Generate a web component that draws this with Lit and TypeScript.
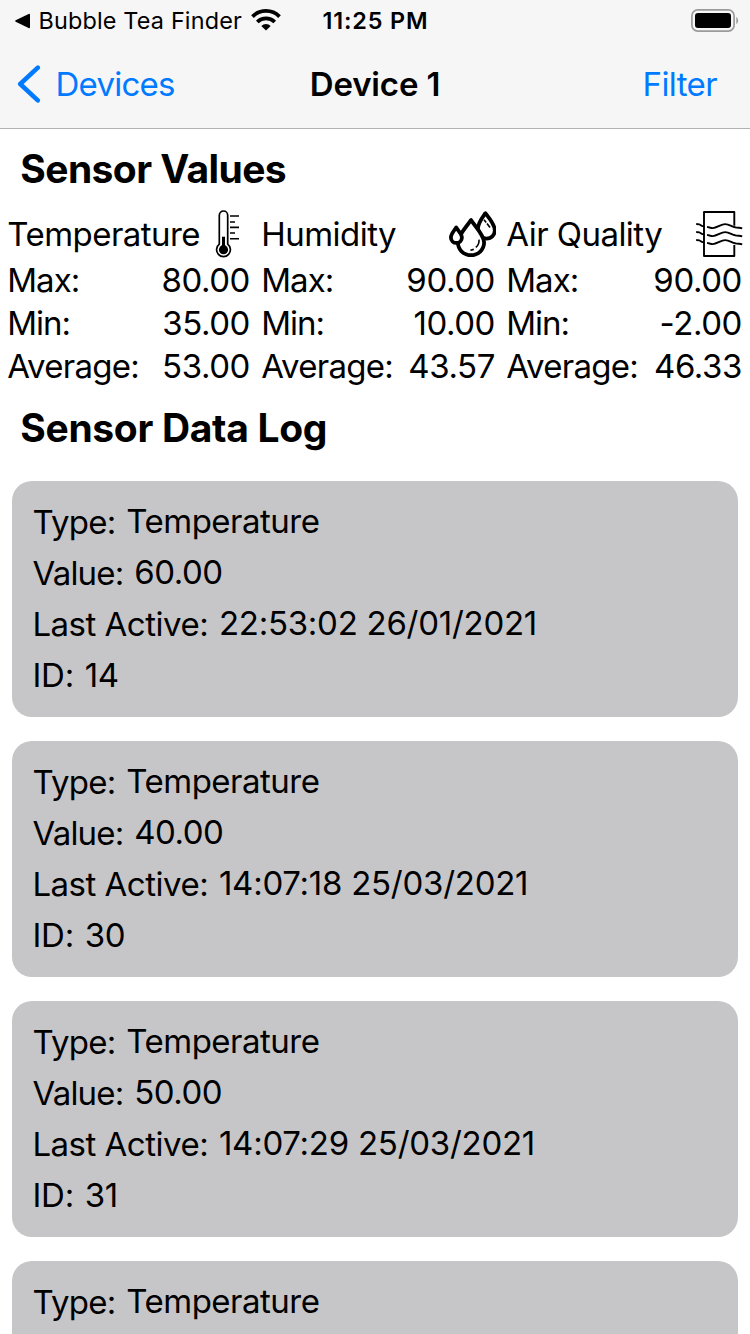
import { LitElement, html, css, svg, nothing, TemplateResult } from "lit";
import { customElement, property } from "lit/decorators.js";

interface Reading {
  type: string;
  value?: string;
  lastActive?: string;
  id?: string;
}

interface Stat {
  name: string;
  icon: TemplateResult;
  max: string;
  min: string;
  average: string;
}

const thermometer = html`<svg width="48" height="48" viewBox="0 0 48 48" fill="none" stroke="#000">
  <path stroke-width="1.7" d="M16.3 34.2V5.2a4.2 4.2 0 0 1 8.4 0v29a6.9 6.9 0 1 1-8.4 0Z" />
  <circle cx="20.5" cy="39.7" r="4.6" fill="#000" stroke="none" />
  <path stroke-width="3" d="M20.5 26.7V38" />
  <path stroke-width="1.6" d="M27 6h9M27 12h5M27 17.4h9M27 23h5M27 28.8h9" />
</svg>`;

const drops = html`<svg width="48" height="48" viewBox="0 0 48 48" fill="#fff" stroke="#000" stroke-width="3.8" stroke-linejoin="round">
  <path d="M37.4 3.2C34.5 7.4 29.6 13 29.9 19.4C30.2 24.6 34 28.6 38.6 28.6C43.4 28.6 47 24.8 46.8 20.2C46.6 14 40.6 7.4 37.4 3.2Z" />
  <path d="M23 10C19 16.4 9.9 25 9.9 32.6a13.1 12.6 0 0 0 26.2 0C36.1 25 27 16.4 23 10Z" />
  <path d="M8.2 17.4C6.4 20.4 2.9 24 2.9 27.4a5.5 5.5 0 0 0 11 0C13.9 24 10 20.4 8.2 17.4Z" />
  <path fill="none" stroke-width="1.6" d="M36 9.8l2.2 2.8M39 13.6l3 4M31 29.6c.3 3.4-1 6-3.2 7.8M25.8 39.4l-3.4 .8" />
</svg>`;

const wave = (y: number) => svg`<path d="M1.2 ${y}l3 .3 3 1.8h1.8M12 ${y + 2.9}c2 .2 3.6 1.2 5.8 1.2c4 0 8-4 12.4-4c4 0 6.4 2.4 10 3.2c2.4 .6 4.8 .4 7 1" />`;

const airflow = html`<svg width="48" height="48" viewBox="0 0 48 48" fill="none" stroke="#000" stroke-width="1.9">
  <path stroke-linejoin="round" d="M39.3 15.8V2H9v44h30.3V35" />
  ${[14, 22, 30].map(wave)}
</svg>`;

const stats: Stat[] = [
  { name: "Temperature", icon: thermometer, max: "80.00", min: "35.00", average: "53.00" },
  { name: "Humidity", icon: drops, max: "90.00", min: "10.00", average: "43.57" },
  { name: "Air Quality", icon: airflow, max: "90.00", min: "-2.00", average: "46.33" },
];

const readings: Reading[] = [
  { type: "Temperature", value: "60.00", lastActive: "22:53:02 26/01/2021", id: "14" },
  { type: "Temperature", value: "40.00", lastActive: "14:07:18 25/03/2021", id: "30" },
  { type: "Temperature", value: "50.00", lastActive: "14:07:29 25/03/2021", id: "31" },
  { type: "Temperature" },
];

@customElement("status-bar")
export class StatusBar extends LitElement {
  static styles = css`
    :host {
      display: grid;
      grid-template-columns: 1fr auto 1fr;
      align-items: center;
      height: 40px;
      padding: 0 11px 0 15px;
      font-size: 23.4px;
      line-height: 40px;
      white-space: nowrap;
    }
    svg { display: block; }
    .left { display: flex; align-items: center; }
    .app { margin: 1px 0 0 8.5px; letter-spacing: 0.17px; }
    .wifi { margin: 0 0 1px 9.5px; }
    .time { font-weight: 600; letter-spacing: 0.85px; margin: 1px 0 0 -3px; }
    .battery { justify-self: end; }
  `;
  render() {
    return html`
      <div class="left">
        <svg width="15" height="16" viewBox="0 0 15 16"><path d="M.7 7.3L13.6 .9Q15 .3 15 1.8V14.2Q15 15.7 13.6 15.1L.7 8.7Q-.4 8 .7 7.3Z" /></svg>
        <span class="app">Bubble Tea Finder</span>
        <svg class="wifi" width="30" height="22" viewBox="0 0 30 22">
          <g fill="none" stroke="#000" stroke-width="3.8">
            <path d="M1.5 7.6a19 19 0 0 1 27 0" />
            <path d="M6.3 13a12.3 12.3 0 0 1 17.4 0" />
          </g>
          <path d="M15 21.6L10.3 17a6.6 6.6 0 0 1 9.4 0Z" />
        </svg>
      </div>
      <span class="time">11:25 PM</span>
      <svg class="battery" width="48" height="24" viewBox="0 0 48 24">
        <rect x=".9" y=".9" width="42.2" height="21.2" rx="5.8" fill="none" stroke="#9b9b9b" stroke-width="1.7" />
        <rect x="4" y="4" width="36" height="15" rx="3" />
        <path d="M45.3 8c2.4 1 2.4 6 0 7Z" fill="#9b9b9b" />
      </svg>`;
  }
}

@customElement("nav-bar")
export class NavBar extends LitElement {
  static styles = css`
    :host {
      display: grid;
      grid-template-columns: 1fr auto 1fr;
      align-items: center;
      height: 88px;
      padding: 0 33px;
      line-height: 88px;
      white-space: nowrap;
    }
    svg { display: block; }
    .back { display: flex; align-items: center; gap: 14.5px; margin-left: -16px; color: #007aff; letter-spacing: -0.75px; }
    .title { font-weight: 600; letter-spacing: -0.14px; }
    .action { justify-self: end; color: #007aff; letter-spacing: -0.6px; }
  `;
  render() {
    return html`
      <div class="back">
        <svg width="24" height="38" viewBox="0 0 24 38" fill="none" stroke="#007aff" stroke-width="4.5" stroke-linecap="round" stroke-linejoin="round"><path d="M20.8 2.6L3.2 19L20.8 35.4" /></svg>
        <span>Devices</span>
      </div>
      <span class="title">Device 1</span>
      <span class="action">Filter</span>`;
  }
}

@customElement("stat-column")
export class StatColumn extends LitElement {
  @property({ attribute: false }) stat!: Stat;
  static styles = css`
    :host { display: block; white-space: nowrap; }
    svg { display: block; }
    .head, .row { display: flex; justify-content: space-between; align-items: center; }
    .head { height: 48px; margin-bottom: 1px; line-height: 46px; letter-spacing: -0.55px; }
    .row { height: 43px; line-height: 43px; }
    .label { letter-spacing: -1px; }
    .row:last-child .label { letter-spacing: -0.75px; }
    .value { letter-spacing: -0.42px; }
    .name, .label { margin-left: -0.7px; }
    .icon { flex: 1; display: flex; justify-content: flex-end; margin-right: -0.8px; }
    :host(.centered) .icon { justify-content: center; margin-right: -4px; }
  `;
  render() {
    const s = this.stat;
    const rows = [["Max:", s.max], ["Min:", s.min], ["Average:", s.average]];
    return html`
      <div class="head"><span class="name">${s.name}</span><span class="icon">${s.icon}</span></div>
      ${rows.map(([l, v]) => html`<div class="row"><span class="label">${l}</span><span class="value">${v}</span></div>`)}`;
  }
}

@customElement("reading-card")
export class ReadingCard extends LitElement {
  @property({ attribute: false }) reading!: Reading;
  static styles = css`
    :host {
      display: block;
      box-sizing: border-box;
      height: 236px;
      flex: none;
      padding: 16px 20.4px;
      border-radius: 20px;
      background: #c6c6c8;
      white-space: nowrap;
    }
    .row { display: flex; align-items: center; gap: 10.8px; height: 51px; line-height: 51px; }
    .raised { padding-bottom: 2px; }
    .type { letter-spacing: -0.73px; }
    .word { letter-spacing: -0.5px; }
    .val { letter-spacing: -0.8px; }
    .num { letter-spacing: -0.5px; }
    .active { letter-spacing: -0.5px; }
    .date { letter-spacing: -0.26px; }
    .id { letter-spacing: -0.2px; }
  `;
  render() {
    const r = this.reading;
    const row = (label: string, labelClass: string, value: string | undefined, valueClass: string) =>
      value === undefined
        ? nothing
        : html`<div class="row"><span class=${labelClass}>${label}</span><span class=${valueClass}>${value}</span></div>`;
    return html`
      ${row("Type:", "type", r.type, "word raised")}
      ${row("Value:", "val", r.value, "num raised")}
      ${row("Last Active:", "active", r.lastActive, "date raised")}
      ${row("ID:", "id", r.id, "num")}`;
  }
}

@customElement("app-root")
export class AppRoot extends LitElement {
  static styles = css`
    :host {
      display: flex;
      flex-direction: column;
      height: 100vh;
      overflow: hidden;
      background: #fff;
      color: #000;
      font-family: Inter, "Liberation Sans", sans-serif;
      font-size: 33px;
    }
    header { flex: none; background: #f6f6f6; border-bottom: 1px solid #b2b2b2; }
    h2 { flex: none; margin: 0; padding-left: 20.3px; font-size: 39px; font-weight: 700; white-space: nowrap; }
    .values { height: 81px; line-height: 80px; letter-spacing: -0.58px; }
    .log { height: 81px; line-height: 80px; letter-spacing: -0.33px; }
    .stats { flex: none; display: grid; grid-template-columns: 242px 233px 235px; gap: 12px; padding-left: 8px; }
    .list { display: flex; flex-direction: column; gap: 24px; padding: 12px 12px 0; }
  `;
  render() {
    return html`
      <header><status-bar></status-bar><nav-bar></nav-bar></header>
      <h2 class="values">Sensor Values</h2>
      <section class="stats">
        ${stats.map((s, i) => html`<stat-column class=${i === 0 ? "centered" : ""} .stat=${s}></stat-column>`)}
      </section>
      <h2 class="log">Sensor Data Log</h2>
      <section class="list">${readings.map((r) => html`<reading-card .reading=${r}></reading-card>`)}</section>`;
  }
}
